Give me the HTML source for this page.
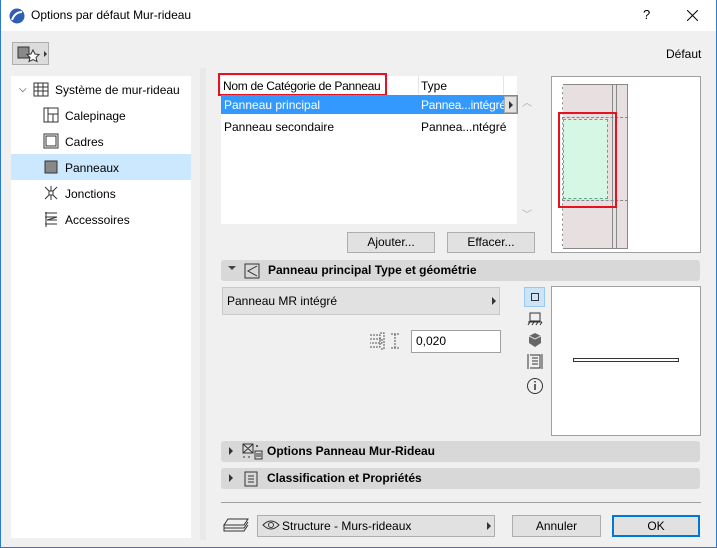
<!DOCTYPE html>
<html><head><meta charset="utf-8"><style>
*{box-sizing:border-box;margin:0;padding:0}
body{width:717px;height:548px;overflow:hidden;background:#f0f0f0;font-family:"Liberation Sans",sans-serif;font-size:12px;color:#000;position:relative}
.a{position:absolute}
.btn{position:absolute;background:#e1e1e1;border:1px solid #adadad;text-align:center;line-height:18px}
.sec{position:absolute;left:221px;width:479px;height:21px;background:#d8d8d8;border-radius:3px;font-weight:bold;line-height:21px}
.tri{position:absolute;width:0;height:0;border-top:4px solid transparent;border-bottom:4px solid transparent;border-left:4px solid #333}
</style></head><body>
<div class="a" style="left:0;top:0;width:717px;height:548px;border:1px solid #2b79d0;border-top:none"></div>
<div class="a" style="left:1px;top:0;width:715px;height:31px;background:#fff"></div>
<svg class="a" style="left:9px;top:8px" width="16" height="16"><circle cx="8" cy="8" r="7.5" fill="#2d5fb5"/><path d="M3 12 Q6 4 13 4" stroke="#fff" stroke-width="2" fill="none"/></svg>
<div class="a" style="left:31px;top:8px;font-size:12px">Options par défaut Mur-rideau</div>
<div class="a" style="left:643px;top:7px;font-size:13px">?</div>
<svg class="a" style="left:687px;top:10px" width="11" height="11"><path d="M0 0L11 11M11 0L0 11" stroke="#000" stroke-width="1"/></svg>
<div class="a" style="left:12px;top:42px;width:37px;height:23px;background:#dcdcdc;border:1px solid #adadad"></div>
<svg class="a" style="left:15px;top:44px" width="34" height="20"><rect x="3" y="3" width="11" height="11" fill="#888" stroke="#333"/><path d="M18 6 l2 4 4 0.5 -3 3 1 4 -4-2 -4 2 1-4 -3-3 4-.5z" fill="#fff" stroke="#333"/><path d="M29 7 l3 3 -3 3z" fill="#333"/></svg>
<div class="a" style="left:666px;top:47px">Défaut</div>
<div class="a" style="left:11px;top:76px;width:180px;height:462px;background:#fff"></div>
<div class="a" style="left:11px;top:154px;width:180px;height:26px;background:#cce8ff"></div>
<div class="a" style="left:19px;top:84px;font-size:10px">⌵</div>
<svg class="a" style="left:33px;top:81px" width="16" height="16"><path d="M1 2h14v13H1zM1 6h14M1 10h14M5 2v13M10 2v13" stroke="#333" fill="none"/></svg>
<div class="a" style="left:55px;top:83px">Système de mur-rideau</div>
<svg class="a" style="left:43px;top:107px" width="16" height="16"><path d="M1 1h14v14H1zM5 1v14M5 7h10M10 7v8" stroke="#333" fill="none"/></svg>
<div class="a" style="left:65px;top:109px">Calepinage</div>
<svg class="a" style="left:43px;top:133px" width="16" height="16"><path d="M1 1h14v14H1zM3 3h10v10H3z" stroke="#333" fill="none"/></svg>
<div class="a" style="left:65px;top:135px">Cadres</div>
<svg class="a" style="left:43px;top:159px" width="16" height="16"><rect x="2" y="2" width="12" height="12" fill="#888" stroke="#333"/></svg>
<div class="a" style="left:65px;top:161px">Panneaux</div>
<svg class="a" style="left:43px;top:185px" width="16" height="16"><path d="M2 2l12 12M14 2L2 14M8 1v14" stroke="#333" fill="none"/><rect x="6" y="6" width="4" height="4" fill="#fff" stroke="#333"/></svg>
<div class="a" style="left:65px;top:187px">Jonctions</div>
<svg class="a" style="left:43px;top:211px" width="16" height="16"><path d="M2 2h12M2 6h12l-10 3h10M2 13h12M3 1v15" stroke="#333" fill="none"/></svg>
<div class="a" style="left:65px;top:213px">Accessoires</div>
<div class="a" style="left:200px;top:68px;width:6px;height:472px;background:#e9e9e9"></div>
<div class="a" style="left:221px;top:76px;width:296px;height:148px;background:#fff"></div>
<div class="a" style="left:517px;top:76px;width:20px;height:148px;background:#f0f0f0"></div>
<div class="a" style="left:418px;top:76px;width:1px;height:18px;background:#e5e5e5"></div>
<div class="a" style="left:503px;top:76px;width:1px;height:18px;background:#e5e5e5"></div>
<div class="a" style="left:218px;top:73px;width:169px;height:23px;border:2px solid #e81123"></div>
<div class="a" style="left:223px;top:79px;letter-spacing:-0.3px">Nom de Catégorie de Panneau</div>
<div class="a" style="left:421px;top:79px">Type</div>
<div class="a" style="left:221px;top:95px;width:297px;height:19px;background:#3399ff;border-right:1px solid #3399ff"></div>
<div class="a" style="left:224px;top:98px;color:#fff">Panneau principal</div>
<div class="a" style="left:421px;top:98px;color:#fff;letter-spacing:-0.2px">Pannea...intégré</div>
<div class="a" style="left:504px;top:96px;width:13px;height:17px;background:#e1e1e1;border:1px solid #adadad"></div>
<div class="tri" style="left:509px;top:101px"></div>
<div class="a" style="left:224px;top:120px">Panneau secondaire</div>
<div class="a" style="left:421px;top:120px">Pannea...ntégré</div>
<div class="a" style="left:522px;top:94px;color:#aaa;font-size:10px">︿</div>
<div class="a" style="left:522px;top:206px;color:#aaa;font-size:10px">﹀</div>
<div class="btn" style="left:347px;top:232px;width:88px;height:21px">Ajouter...</div>
<div class="btn" style="left:447px;top:232px;width:88px;height:21px">Effacer...</div>
<div class="a" style="left:551px;top:76px;width:150px;height:177px;background:#fff;border:1px solid #a0a0a0"></div>
<div class="a" style="left:562px;top:84px;width:66px;height:165px;background:#e8e0e0;border:1px solid #888"></div>
<div class="a" style="left:612px;top:84px;width:1px;height:165px;background:#888"></div>
<div class="a" style="left:616px;top:84px;width:1px;height:165px;background:#888"></div>
<div class="a" style="left:562px;top:84px;width:1px;height:165px;border-left:1px dashed #fff"></div>
<div class="a" style="left:562px;top:117px;width:66px;height:1px;border-top:1px dashed #888"></div>
<div class="a" style="left:562px;top:200px;width:66px;height:1px;border-top:1px dashed #888"></div>
<div class="a" style="left:563px;top:119px;width:45px;height:80px;background:#d5f7e3;border:1px dashed #5a8"></div>
<div class="a" style="left:558px;top:112px;width:59px;height:96px;border:2px solid #e81123"></div>
<div class="sec" style="top:260px"><div class="tri" style="left:7px;top:6px;border-left:4px solid transparent;border-right:4px solid transparent;border-top:4px solid #444;border-bottom:none"></div>
<svg class="a" style="left:23px;top:3px" width="16" height="16"><path d="M1 1h14v14H1zM13 3L4 8l9 5" stroke="#333" fill="none"/></svg>
<span class="a" style="left:47px">Panneau principal Type et géométrie</span></div>
<div class="a" style="left:222px;top:287px;width:278px;height:28px;background:#e1e1e1;border:1px solid #c8c8c8;line-height:26px;padding-left:4px">Panneau MR intégré</div>
<div class="tri" style="left:492px;top:297px"></div>
<svg class="a" style="left:369px;top:330px" width="36" height="22"><path d="M1 5h10v12H1M1 9h12v4H1M11 3h4v16h-4M22 4h8M22 18h8M26 4v14" stroke="#555" fill="none" stroke-dasharray="2 1"/></svg>
<div class="a" style="left:411px;top:330px;width:90px;height:23px;background:#fff;border:1px solid #a0a0a0;line-height:21px;padding-left:4px">0,020</div>
<div class="a" style="left:524px;top:287px;width:21px;height:20px;background:#cce4f7;border:1px solid #99c9ef"></div>
<div class="a" style="left:531px;top:293px;width:8px;height:8px;border:1px solid #333"></div>
<svg class="a" style="left:527px;top:311px" width="16" height="16"><path d="M3 2h10v8H3zM1 11h14M3 11l-2 3M7 11l-2 3M11 11l-2 3M15 11l-2 3" stroke="#333" fill="none"/></svg>
<svg class="a" style="left:527px;top:332px" width="16" height="16"><path d="M8 1l6 3v7l-6 4-6-4V4z" fill="#666"/><path d="M2 4l6 3 6-3" stroke="#ddd" fill="none"/></svg>
<svg class="a" style="left:527px;top:353px" width="16" height="16"><path d="M1 1v15M15 1v15M3 2h10v13H3M5 5h6M5 8h6M5 11h6" stroke="#333" fill="none"/></svg>
<svg class="a" style="left:526px;top:377px" width="18" height="18"><circle cx="9" cy="9" r="7.5" stroke="#333" fill="none"/><path d="M9 7v6M9 4v1.5" stroke="#333" stroke-width="1.5"/></svg>
<div class="a" style="left:551px;top:286px;width:150px;height:150px;background:#fff;border:1px solid #a0a0a0"></div>
<div class="a" style="left:573px;top:358px;width:106px;height:4px;border:1px solid #333;background:#fff"></div>
<div class="sec" style="top:441px"><div class="tri" style="left:8px;top:6px"></div>
<svg class="a" style="left:20px;top:2px" width="22" height="18"><path d="M2 1h10v9H2zM2 1l10 9M12 1L2 10M15 3h2M16 2v2M14 8h7v8h-7zM15 11h5M15 13h5M2 14h2M7 14h2" stroke="#333" fill="none"/></svg>
<span class="a" style="left:46px">Options Panneau Mur-Rideau</span></div>
<div class="sec" style="top:468px"><div class="tri" style="left:8px;top:6px"></div>
<svg class="a" style="left:23px;top:3px" width="14" height="16"><path d="M1 1h12v14H1zM4 5h6M4 8h6M4 11h6" stroke="#333" fill="none"/></svg>
<span class="a" style="left:46px">Classification et Propriétés</span></div>
<div class="a" style="left:221px;top:502px;width:480px;height:1px;background:#a0a0a0"></div>
<svg class="a" style="left:222px;top:517px" width="28" height="18"><path d="M6 2h20l-4 6H2zM2 8v3h20l4-6M2 11v3h20l4-6" stroke="#333" fill="none"/></svg>
<div class="a" style="left:257px;top:515px;width:238px;height:22px;background:#e1e1e1;border:1px solid #adadad;line-height:20px;padding-left:24px">Structure - Murs-rideaux</div>
<svg class="a" style="left:262px;top:519px" width="18" height="12"><path d="M1 6Q9-2 17 6Q9 14 1 6z" stroke="#333" fill="none"/><circle cx="9" cy="6" r="2.5" stroke="#333" fill="none"/></svg>
<div class="tri" style="left:487px;top:522px"></div>
<div class="btn" style="left:512px;top:515px;width:89px;height:22px;line-height:20px">Annuler</div>
<div class="btn" style="left:612px;top:515px;width:88px;height:22px;line-height:18px;border:2px solid #0078d7">OK</div>
</body></html>
